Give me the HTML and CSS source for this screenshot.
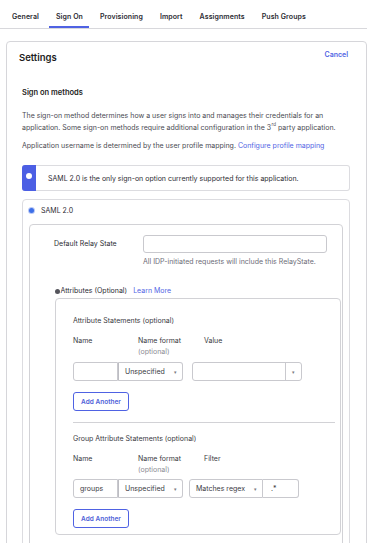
FILE: index.html
```html
<!DOCTYPE html>
<html>
<head>
<meta charset="utf-8">
<link rel="stylesheet" href="styles.css">
</head>
<body>
<nav class="tabs">
  <span class="tab">General</span>
  <span class="tab active">Sign On</span>
  <span class="tab">Provisioning</span>
  <span class="tab">Import</span>
  <span class="tab">Assignments</span>
  <span class="tab">Push Groups</span>
</nav>
<section class="card">
  <div class="card-head">
    <h2 class="card-title">Settings</h2>
    <a class="link cancel">Cancel</a>
  </div>
  <div class="card-body">
    <h3 class="sub-title">Sign on methods</h3>
    <p class="para"><span class="line">The sign-on method determines how a user signs into and manages their credentials for an</span><span class="line">application. Some sign-on methods require additional configuration in the 3<span class="sup">rd</span>party application.</span></p>
    <p class="para para2">Application username is determined by the user profile mapping. <a class="link">Configure profile mapping</a></p>
    <div class="notice">
      <span class="strip"><span class="strip-dot"></span></span>
      <span class="notice-text">SAML 2.0 is the only sign-on option currently supported for this application.</span>
    </div>
    <div class="saml">
      <div class="radio-row"><span class="radio"></span><span>SAML 2.0</span></div>
      <div class="inner">
        <div class="relay-row">
          <span class="relay-label">Default Relay State</span>
          <div class="relay-field">
            <div class="input relay-input"></div>
            <div class="help">All IDP-initiated requests will include this RelayState.</div>
          </div>
        </div>
        <div class="attr-head"><span class="attr-icon"></span><span>Attributes (Optional)</span><a class="link learn">Learn More</a></div>
        <div class="attr-box">
          <div class="stmt-title">Attribute Statements (optional)</div>
          <div class="col-labels">
            <span class="col col-name">Name</span>
            <span class="col col-format">Name format<br><span class="opt">(optional)</span></span>
            <span class="col">Value</span>
          </div>
          <div class="input-row">
            <div class="input w-name"></div>
            <div class="input select w-format"><span>Unspecified</span><span class="caret">▾</span></div>
            <div class="input combo"><span class="combo-main"></span><span class="combo-arrow"><span class="caret">▾</span></span></div>
          </div>
          <button class="btn">Add Another</button>
          <div class="sep"></div>
          <div class="stmt-title">Group Attribute Statements (optional)</div>
          <div class="col-labels">
            <span class="col col-name">Name</span>
            <span class="col col-format">Name format<br><span class="opt">(optional)</span></span>
            <span class="col">Filter</span>
          </div>
          <div class="input-row row2">
            <div class="input w-name"><span>groups</span></div>
            <div class="input select w-format"><span>Unspecified</span><span class="caret">▾</span></div>
            <div class="input select w-filter"><span>Matches regex</span><span class="caret">▾</span></div>
            <div class="input w-regex"><span>.*</span></div>
          </div>
          <button class="btn">Add Another</button>
        </div>
      </div>
    </div>
  </div>
</section>
</body>
</html>
```

FILE: styles.css
```css
html, body {
  margin: 0;
  padding: 0;
  overflow: hidden;
  background: #ffffff;
}
body {
  font-family: Inter, "Noto Sans", sans-serif;
  font-size: 7px;
  color: #2c2c33;
  width: 367px;
  height: 543px;
}
.tabs {
  display: flex;
  gap: 4px;
  padding-left: 5px;
  border-bottom: 1px solid #d8d8dc;
  height: 28px;
}
.tab {
  padding: 12px 6px 6px 7px;
  line-height: 10px;
  font-size: 7px;
  font-weight: 600;
  letter-spacing: 0.08px;
  color: #2c2c33;
  white-space: nowrap;
}
.tab.active {
  box-shadow: inset 0 -2px 0 #4f62e3;
}
.card {
  margin: 12px 0 0 6px;
  border: 1px solid #d6d6da;
  border-radius: 4px 4px 0 0;
  height: 600px;
}
.card-head {
  display: flex;
  justify-content: space-between;
  align-items: flex-start;
  padding: 10px 18px 0 12px;
}
.card-title {
  margin: 0;
  font-size: 9.5px;
  line-height: 12px;
  font-weight: 600;
  color: #1d1d21;
}
.link {
  color: #5265e4;
  text-decoration: none;
}
.cancel {
  font-weight: 600;
  line-height: 12px;
  margin-top: -3px;
}
.card-body {
  padding: 0 16px 0 15px;
}
.sub-title {
  margin: 24px 0 0;
  font-size: 7.5px;
  line-height: 10px;
  font-weight: 600;
  color: #1d1d21;
}
.para {
  margin: 12px 0 0;
  line-height: 12px;
  color: #4a4a52;
}
.line {
  display: block;
  white-space: nowrap;
}
.sup {
  display: inline-block;
  font-size: 4.5px;
  line-height: 4px;
  vertical-align: 4px;
  margin: 0 2px 0 0.5px;
}
.para2 { margin-top: 6px; }
.notice {
  margin-top: 13px;
  height: 26px;
  box-sizing: border-box;
  border: 1px solid #dcdce0;
  border-left: none;
  border-radius: 3px;
  display: flex;
  align-items: center;
}
.strip {
  align-self: stretch;
  width: 14px;
  margin: -1px 0;
  background: #4c5fe4;
  border-radius: 3px 0 0 3px;
  display: flex;
  align-items: center;
  justify-content: center;
}
.strip-dot {
  width: 6px;
  height: 6px;
  border-radius: 50%;
  background: #ffffff;
  margin-top: -4px;
}
.notice-text {
  margin-left: 12px;
  color: #2c2c33;
}
.saml {
  margin-top: 8px;
  border: 1px solid #dcdce0;
  border-radius: 4px 4px 0 0;
  height: 400px;
}
.radio-row {
  display: flex;
  align-items: center;
  gap: 7px;
  padding: 6px 0 0 6px;
  line-height: 10px;
  color: #2c2c33;
}
.radio {
  width: 5px;
  height: 5px;
  border-radius: 50%;
  background: #3d6fe8;
  box-shadow: 0 0 0 1px #b9c8f5;
  margin-top: -1px;
}
.inner {
  margin: 8px 6px 0;
  border: 1px solid #d2d2d6;
  border-radius: 4px 4px 0 0;
  height: 400px;
}
.relay-row {
  display: flex;
  padding: 10px 0 0 24px;
}
.relay-label {
  width: 89px;
  line-height: 18px;
}
.relay-field {
  display: flex;
  flex-direction: column;
}
.input {
  box-sizing: border-box;
  border: 1px solid #c9c9ce;
  border-radius: 3px;
  background: #ffffff;
  display: flex;
  align-items: center;
  color: #3a3a42;
}
.relay-input {
  width: 184px;
  height: 18px;
}
.help {
  margin-top: 4px;
  line-height: 10px;
  color: #6d6d78;
}
.attr-head {
  margin: 19px 0 0 25px;
  display: flex;
  align-items: center;
  line-height: 10px;
  color: #2c2c33;
}
.attr-icon {
  width: 5px;
  height: 5px;
  border-radius: 50%;
  background: #55555c;
  margin-right: 0.5px;
}
.learn { margin-left: 6px; }
.attr-box {
  margin: 2px 1px 0 25px;
  border: 1px solid #d2d2d6;
  border-radius: 4px;
  padding: 17px 5px 6px 17px;
}
.stmt-title {
  line-height: 10px;
  color: #3a3a42;
}
.col-labels {
  display: flex;
  margin-top: 9px;
  line-height: 11px;
  color: #3a3a42;
}
.col-name { width: 65px; }
.col-format { width: 66px; }
.opt { color: #8c8c94; }
.input-row {
  display: flex;
  margin-top: 5px;
  height: 19px;
}
.input-row .input { height: 19px; }
.row2 { margin-top: 4px; }
.w-name { width: 45px; border-radius: 3px 0 0 3px; padding-left: 6px; }
.select {
  justify-content: space-between;
  padding: 0 5px 0 6px;
}
.w-format { width: 65px; border-radius: 0 3px 3px 0; border-left-color: #bdbdc3; }
.caret {
  font-size: 5px;
  color: #7a7a82;
}
.combo {
  width: 110px;
  margin-left: 9px;
  align-items: stretch;
}
.combo-main { flex: 1; }
.combo-arrow {
  width: 15px;
  border-left: 1px solid #c9c9ce;
  display: flex;
  align-items: center;
  justify-content: center;
}
.w-filter {
  width: 74px;
  margin-left: 6px;
  border-radius: 3px 0 0 3px;
  padding-left: 6px;
}
.w-regex {
  width: 36px;
  border-radius: 0 3px 3px 0;
  border-left: none;
  padding-left: 8px;
}
.btn {
  display: block;
  margin-top: 11px;
  width: 56px;
  height: 19px;
  box-sizing: border-box;
  border: 1px solid #4f62e3;
  border-radius: 3px;
  background: #ffffff;
  color: #4f5fd8;
  font-family: Inter, "Noto Sans", sans-serif;
  font-size: 6.5px;
  font-weight: 600;
  padding: 0;
}
.sep {
  margin-top: 11px;
  height: 1px;
  background: #d2d2d6;
}
.sep + .stmt-title { margin-top: 11px; }
```
